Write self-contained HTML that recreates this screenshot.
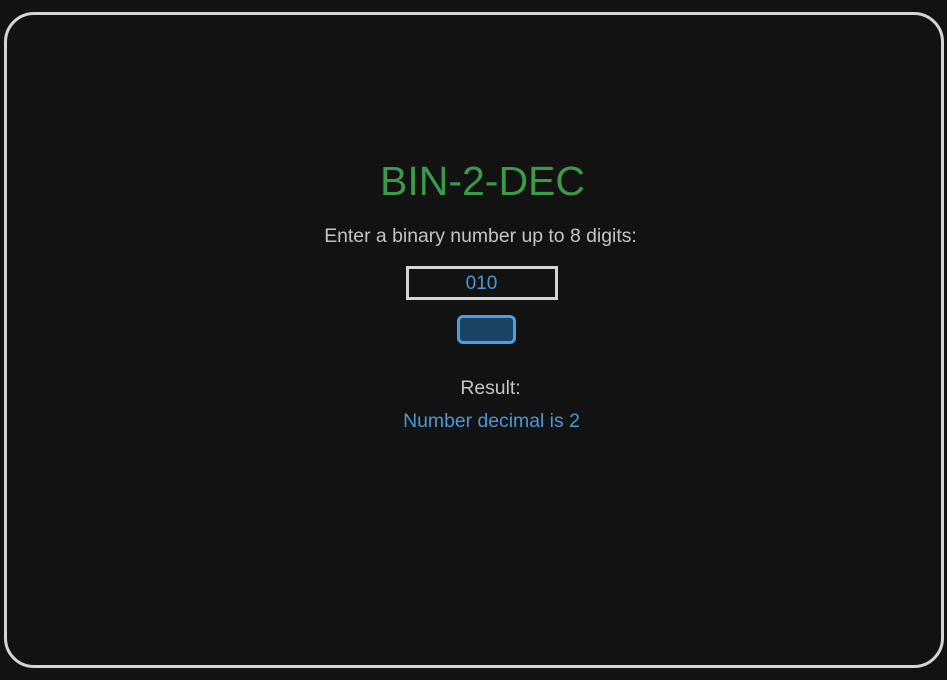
<!DOCTYPE html>
<html><head><style>
html,body{margin:0;padding:0;background:#121212;width:947px;height:680px;overflow:hidden;font-family:"Liberation Sans",sans-serif;}
.card{position:absolute;left:4px;top:12px;width:934px;height:650px;border:3px solid #d4d4d4;border-radius:30px;}
.t{position:absolute;left:0;width:947px;text-align:center;}
</style></head><body>
<div class="card"></div>
<div class="t" style="top:158px;font-size:41px;color:#3a9a48;margin-left:9px">BIN-2-DEC</div>
<div class="t" style="top:225px;font-size:19.4px;color:#c4c4c4;margin-left:7px">Enter a binary number up to 8 digits:</div>
<div style="position:absolute;left:406px;top:266px;width:146px;height:28px;border:3px solid #d4d4d4;"></div>
<div class="t" style="top:273px;font-size:19px;color:#4a98d8;margin-left:8px">010</div>
<div style="position:absolute;left:457px;top:315px;width:53px;height:23px;border:3px solid #4a9ee6;border-radius:6px;background:#1a4466;"></div>
<div class="t" style="top:377px;font-size:19.4px;color:#c4c4c4;margin-left:17px">Result:</div>
<div class="t" style="top:410px;font-size:19.4px;color:#4a98d8;margin-left:18px">Number decimal is 2</div>
</body></html>
